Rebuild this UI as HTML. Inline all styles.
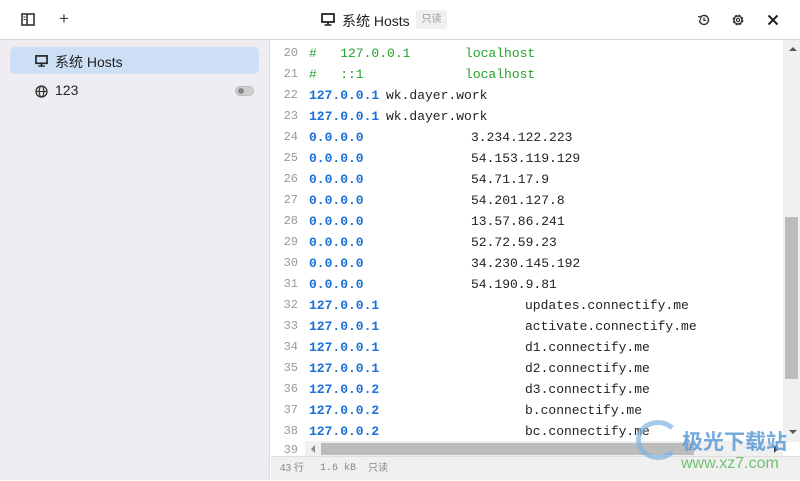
<!DOCTYPE html>
<html><head><meta charset="utf-8"><style>
*{margin:0;padding:0;box-sizing:border-box}
body{width:800px;height:480px;overflow:hidden;background:#fff;font-family:"Liberation Sans","Noto Sans CJK SC",sans-serif;position:relative}
.top{position:absolute;left:0;top:0;width:800px;height:40px;border-bottom:1px solid #d6d6d6;background:#fff}
.side{position:absolute;left:0;top:40px;width:270px;height:440px;background:#efedf2;border-right:1px solid #dcdcdc}
.sel{position:absolute;left:10px;top:47px;width:249px;height:27px;background:#cddff4;border-radius:5px}
.it{position:absolute;font-size:14px;color:#222}
.code{position:absolute;left:271px;top:41px;width:512px;height:401px;overflow:hidden;font-family:"Liberation Mono",monospace;font-size:13px}
.ln{position:absolute;height:21px;line-height:21px;width:600px}
.ln .n{position:absolute;left:0;width:27px;text-align:right;color:#999;font-size:12px}
.ln span{position:absolute;white-space:pre}
.b{color:#1a6fd8;font-weight:bold}
.g{color:#23a22b}
.k{color:#222}
.status{position:absolute;left:271px;top:456px;width:529px;height:24px;background:#f0f0f0;border-top:1px solid #ddd;font-size:10px;color:#888;line-height:24px}
</style></head><body>
<div class="top">
<svg style="position:absolute;left:21px;top:13px" width="14" height="13" viewBox="0 0 14 13"><rect x="1" y="1" width="12" height="11" fill="none" stroke="#333" stroke-width="1.6"/><line x1="6" y1="1" x2="6" y2="12" stroke="#333" stroke-width="1.6"/><line x1="2.5" y1="4" x2="4.5" y2="4" stroke="#333"/><line x1="2.5" y1="6.5" x2="4.5" y2="6.5" stroke="#333"/></svg>
<div style="position:absolute;left:59px;top:9px;font-size:17px;color:#444">+</div>
<svg style="position:absolute;left:321px;top:13px" width="14" height="13" viewBox="0 0 14 13"><rect x="1" y="1" width="12" height="8" fill="none" stroke="#222" stroke-width="1.8"/><line x1="7" y1="9" x2="7" y2="12" stroke="#222" stroke-width="1.8"/><line x1="3.5" y1="12" x2="10.5" y2="12" stroke="#222" stroke-width="1.5"/></svg>
<div style="position:absolute;left:342px;top:11px;font-size:14px;color:#222">系统 Hosts</div>
<div style="position:absolute;left:416px;top:10px;width:31px;height:19px;background:#f0f0f0;border-radius:3px;font-size:10px;color:#999;text-align:center;line-height:19px">只读</div>
<svg style="position:absolute;left:697px;top:13px" width="14" height="14" viewBox="0 0 14 14"><path d="M2.5 7a4.5 4.5 0 1 0 1.3-3.2" fill="none" stroke="#333" stroke-width="1.4"/><path d="M1 3.5l3 .5-.5 3" fill="none" stroke="#333" stroke-width="1.3"/><path d="M7 4.5V7.5h2" fill="none" stroke="#333" stroke-width="1.3"/></svg>
<svg style="position:absolute;left:731px;top:13px" width="14" height="14" viewBox="0 0 14 14"><circle cx="7" cy="7" r="4.3" fill="none" stroke="#333" stroke-width="2.2" stroke-dasharray="2.2 1.2"/><circle cx="7" cy="7" r="4" fill="none" stroke="#333" stroke-width="1.2"/><circle cx="7" cy="7" r="1.6" fill="none" stroke="#333" stroke-width="1.2"/></svg>
<svg style="position:absolute;left:767px;top:14px" width="12" height="12" viewBox="0 0 12 12"><path d="M1.5 1.5l9 9M10.5 1.5l-9 9" stroke="#222" stroke-width="2"/></svg>
</div>
<div class="side"></div>
<div class="sel"></div>
<svg style="position:absolute;left:35px;top:55px" width="13" height="12" viewBox="0 0 14 13"><rect x="1" y="1" width="12" height="8" fill="none" stroke="#222" stroke-width="1.8"/><line x1="7" y1="9" x2="7" y2="12" stroke="#222" stroke-width="1.8"/><line x1="3.5" y1="12" x2="10.5" y2="12" stroke="#222" stroke-width="1.5"/></svg>
<div class="it" style="left:55px;top:52px">系统 Hosts</div>
<svg style="position:absolute;left:35px;top:85px" width="13" height="13" viewBox="0 0 13 13"><circle cx="6.5" cy="6.5" r="5.5" fill="none" stroke="#333" stroke-width="1.3"/><ellipse cx="6.5" cy="6.5" rx="2.3" ry="5.5" fill="none" stroke="#333" stroke-width="1.2"/><line x1="1" y1="6.5" x2="12" y2="6.5" stroke="#333" stroke-width="1.2"/></svg>
<div class="it" style="left:55px;top:82px">123</div>
<div style="position:absolute;left:235px;top:86px;width:19px;height:10px;border-radius:5px;background:#cfcfcf;border:1px solid #bbb"><div style="position:absolute;left:2px;top:1px;width:6px;height:6px;border-radius:3px;background:#888"></div></div>

<div class="code">
<div class="ln" style="top:2px"><span class="n">20</span><span class="g" style="left:38px">#   127.0.0.1       localhost</span></div>
<div class="ln" style="top:23px"><span class="n">21</span><span class="g" style="left:38px">#   ::1             localhost</span></div>
<div class="ln" style="top:44px"><span class="n">22</span><span class="b" style="left:38px">127.0.0.1</span><span class="k" style="left:115px">wk.dayer.work</span></div>
<div class="ln" style="top:65px"><span class="n">23</span><span class="b" style="left:38px">127.0.0.1</span><span class="k" style="left:115px">wk.dayer.work</span></div>
<div class="ln" style="top:86px"><span class="n">24</span><span class="b" style="left:38px">0.0.0.0</span><span class="k" style="left:200px">3.234.122.223</span></div>
<div class="ln" style="top:107px"><span class="n">25</span><span class="b" style="left:38px">0.0.0.0</span><span class="k" style="left:200px">54.153.119.129</span></div>
<div class="ln" style="top:128px"><span class="n">26</span><span class="b" style="left:38px">0.0.0.0</span><span class="k" style="left:200px">54.71.17.9</span></div>
<div class="ln" style="top:149px"><span class="n">27</span><span class="b" style="left:38px">0.0.0.0</span><span class="k" style="left:200px">54.201.127.8</span></div>
<div class="ln" style="top:170px"><span class="n">28</span><span class="b" style="left:38px">0.0.0.0</span><span class="k" style="left:200px">13.57.86.241</span></div>
<div class="ln" style="top:191px"><span class="n">29</span><span class="b" style="left:38px">0.0.0.0</span><span class="k" style="left:200px">52.72.59.23</span></div>
<div class="ln" style="top:212px"><span class="n">30</span><span class="b" style="left:38px">0.0.0.0</span><span class="k" style="left:200px">34.230.145.192</span></div>
<div class="ln" style="top:233px"><span class="n">31</span><span class="b" style="left:38px">0.0.0.0</span><span class="k" style="left:200px">54.190.9.81</span></div>
<div class="ln" style="top:254px"><span class="n">32</span><span class="b" style="left:38px">127.0.0.1</span><span class="k" style="left:254px">updates.connectify.me</span></div>
<div class="ln" style="top:275px"><span class="n">33</span><span class="b" style="left:38px">127.0.0.1</span><span class="k" style="left:254px">activate.connectify.me</span></div>
<div class="ln" style="top:296px"><span class="n">34</span><span class="b" style="left:38px">127.0.0.1</span><span class="k" style="left:254px">d1.connectify.me</span></div>
<div class="ln" style="top:317px"><span class="n">35</span><span class="b" style="left:38px">127.0.0.1</span><span class="k" style="left:254px">d2.connectify.me</span></div>
<div class="ln" style="top:338px"><span class="n">36</span><span class="b" style="left:38px">127.0.0.2</span><span class="k" style="left:254px">d3.connectify.me</span></div>
<div class="ln" style="top:359px"><span class="n">37</span><span class="b" style="left:38px">127.0.0.2</span><span class="k" style="left:254px">b.connectify.me</span></div>
<div class="ln" style="top:380px"><span class="n">38</span><span class="b" style="left:38px">127.0.0.2</span><span class="k" style="left:254px">bc.connectify.me</span></div>
<div class="ln" style="top:401px"><span class="n">39</span></div>
</div>
<div style="position:absolute;left:271px;top:442px;width:34px;height:14px;"><span style="position:absolute;left:0;width:27px;text-align:right;color:#999;font-size:12px;font-family:'Liberation Mono',monospace;top:1px">39</span></div>
<!-- vertical scrollbar -->
<div style="position:absolute;left:783px;top:40px;width:17px;height:402px;background:#f0f0f0"></div>
<div style="position:absolute;left:789px;top:47px;width:0;height:0;border-left:4px solid transparent;border-right:4px solid transparent;border-bottom:4px solid #555"></div>
<div style="position:absolute;left:785px;top:217px;width:13px;height:162px;background:#bcbcbc"></div>
<div style="position:absolute;left:789px;top:430px;width:0;height:0;border-left:4px solid transparent;border-right:4px solid transparent;border-top:4px solid #555"></div>
<!-- horizontal scrollbar -->
<div style="position:absolute;left:305px;top:441px;width:478px;height:15px;background:#f0f0f0"></div>
<div style="position:absolute;left:311px;top:445px;width:0;height:0;border-top:4px solid transparent;border-bottom:4px solid transparent;border-right:4px solid #888"></div>
<div style="position:absolute;left:321px;top:443px;width:373px;height:12px;background:#bcbcbc"></div>
<div style="position:absolute;left:774px;top:445px;width:0;height:0;border-top:4px solid transparent;border-bottom:4px solid transparent;border-left:4px solid #333"></div>
<div class="status"><span style="position:absolute;left:9px">43 行</span><span style="position:absolute;left:49px;font-family:'Liberation Mono',monospace">1.6 kB</span><span style="position:absolute;left:97px">只读</span></div>
<!-- watermark -->
<div style="position:absolute;left:636px;top:420px;width:44px;height:40px;border-radius:50%;border:5px solid #7fb3e0;border-right-color:transparent;opacity:.7"></div>
<div style="position:absolute;left:682px;top:426px;font-size:21px;font-weight:bold;color:#5b9bd5;white-space:nowrap;opacity:.85">极光下载站</div>
<div style="position:absolute;left:681px;top:455px;font-size:16px;color:#5cb85c;white-space:nowrap;opacity:.85">www.xz7.com</div>
</body></html>
